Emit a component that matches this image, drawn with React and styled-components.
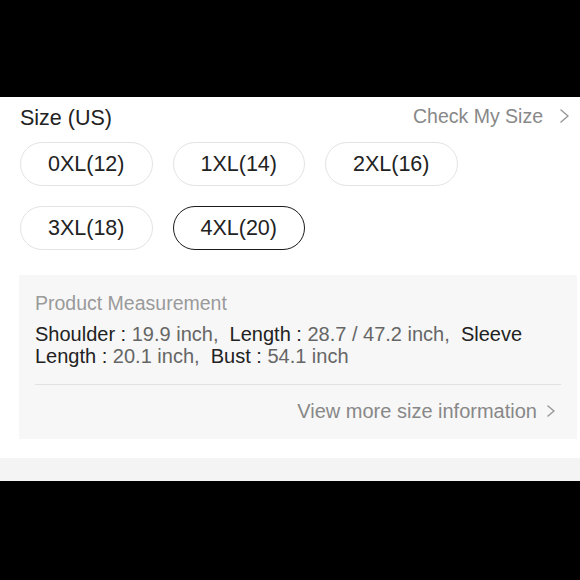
import React, { useState } from 'react';
import styled, { createGlobalStyle } from 'styled-components';

const GlobalStyle = createGlobalStyle`
    html, body {
        margin: 0;
        padding: 0;
        background: #000;
    }
    body {
        font-family: "Liberation Sans", Arial, Helvetica, sans-serif;
        -webkit-font-smoothing: antialiased;
    }
`

const Page = styled.div`
    padding-top: 97px;
    width: 580px;
    height: 580px;
    box-sizing: border-box;
`

const Section = styled.section`
    background: #fff;
    padding: 0 3px 19px 19px;
`

const Header = styled.div`
    display: flex;
    align-items: flex-start;
    justify-content: space-between;
    height: 24px;
    padding: 9px 8px 0 1px;
    margin-bottom: 12px;
`

const Title = styled.h3`
    margin: 0;
    font-size: 21.5px;
    line-height: 24px;
    font-weight: 400;
    color: #222;
`

const LinkButton = styled.button`
    display: flex;
    align-items: center;
    gap: ${p => p.$gap || 10}px;
    border: 0;
    background: none;
    padding: 0;
    font-family: inherit;
    font-size: ${p => p.$size || 20}px;
    line-height: ${p => p.$lh || 24}px;
    color: #888;
    cursor: pointer;
`

const Chips = styled.div`
    display: flex;
    flex-wrap: wrap;
    gap: 20px;
    padding-left: 1px;
`

const Chip = styled.button`
    height: 44px;
    padding: 0 27px;
    box-sizing: border-box;
    border-radius: 22px;
    border: ${p => p.$active ? '1.5px solid #1a1a1a' : '1px solid #e3e3e3'};
    background: #fff;
    font-family: inherit;
    font-size: 21.5px;
    color: #222;
    cursor: pointer;
`

const MeasureBox = styled.div`
    margin-top: 25px;
    background: #f7f7f7;
    padding: 16px;
`

const MeasureTitle = styled.div`
    font-size: 19.5px;
    line-height: 24px;
    color: #9a9a9a;
`

const MeasureText = styled.p`
    margin: 8px 0 0;
    font-size: 20px;
    line-height: 22px;
    color: #222;
`

const Val = styled.span`
    color: #666;
`

const Divider = styled.hr`
    margin: 17px 0 0;
    border: 0;
    height: 1px;
    background: #e2e2e2;
`

const MoreRow = styled.div`
    display: flex;
    justify-content: flex-end;
    margin-top: 14px;
    padding-right: 6px;
`

const Footer = styled.div`
    height: 23px;
    background: #f4f4f4;
`

const Chevron = ({ w = 9, h = 14 }) => (
    <svg width={w} height={h} viewBox={`0 0 ${w} ${h}`} fill="none">
        <polyline
            points={`1,1 ${w - 1},${h / 2} 1,${h - 1}`}
            stroke="#999"
            strokeWidth="1.5"
            strokeLinecap="round"
            strokeLinejoin="round"
        />
    </svg>
);

const sizes = ['0XL(12)', '1XL(14)', '2XL(16)', '3XL(18)', '4XL(20)'];

const measurements = [
    { label: 'Shoulder', value: '19.9 inch' },
    { label: 'Length', value: '28.7 / 47.2 inch' },
    { label: 'Sleeve Length', value: '20.1 inch' },
    { label: 'Bust', value: '54.1 inch' }
];

const App = () => {
    const [selected, setSelected] = useState('4XL(20)');

    return (
        <Page>
            <GlobalStyle />
            <Section>
                <Header>
                    <Title>Size (US)</Title>
                    <LinkButton $size={19.5} $lh={20} $gap={17}>
                        Check My Size
                        <Chevron w={9} h={14} />
                    </LinkButton>
                </Header>
                <Chips>
                    {sizes.map(s => (
                        <Chip key={s} $active={s === selected} onClick={() => setSelected(s)}>
                            {s}
                        </Chip>
                    ))}
                </Chips>
                <MeasureBox>
                    <MeasureTitle>Product Measurement</MeasureTitle>
                    <MeasureText>
                        {measurements.map((m, i) => (
                            <React.Fragment key={m.label}>
                                {m.label} : <Val>{m.value}{i < measurements.length - 1 ? ',\u00a0 ' : ''}</Val>
                            </React.Fragment>
                        ))}
                    </MeasureText>
                    <Divider />
                    <MoreRow>
                        <LinkButton $size={20} $gap={10}>
                            View more size information
                            <Chevron w={8} h={12} />
                        </LinkButton>
                    </MoreRow>
                </MeasureBox>
            </Section>
            <Footer />
        </Page>
    );
}

export default App;
